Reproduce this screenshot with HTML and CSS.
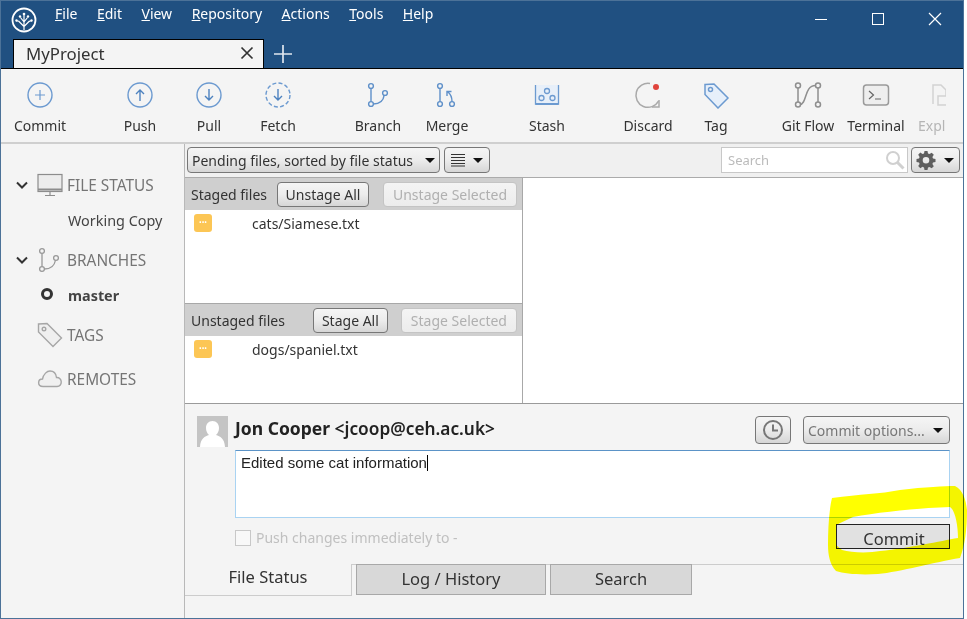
FILE: index.html
```html
<!DOCTYPE html>
<html lang="en">
<head>
    <meta charset="UTF-8">
    <title>MyProject - Sourcetree</title>
    <link rel="stylesheet" href="styles.css">
</head>
<body>
<div class="window">
    <header class="titlebar">
        <div class="title-row">
            <svg class="logo" width="26" height="26" viewBox="0 0 26 26" fill="none" stroke="#fff">
                <circle cx="13" cy="13" r="11.5" stroke-width="1.8"/>
                <path d="M13 23V8M13 19.500L7.500 14M13 19.500l5.500-5.500M13 15L9.500 10.500M13 15l3.500-4.500M7.500 14H5.500M18.500 14h2" stroke-width="1.200"/>
                <g fill="#fff" stroke="none"><circle cx="13" cy="7" r="1.300"/><circle cx="9" cy="9.500" r="1.200"/><circle cx="17" cy="9.500" r="1.200"/><circle cx="5.500" cy="13.500" r="1.200"/><circle cx="20.500" cy="13.500" r="1.200"/></g>
            </svg>
            <nav class="menu">
                <span><u>F</u>ile</span>
                <span><u>E</u>dit</span>
                <span><u>V</u>iew</span>
                <span><u>R</u>epository</span>
                <span><u>A</u>ctions</span>
                <span><u>T</u>ools</span>
                <span><u>H</u>elp</span>
            </nav>
            <div class="win-controls">
                <svg width="14" height="14" viewBox="0 0 14 14" stroke="#fff" fill="none"><path d="M1 7.500h12"/></svg>
                <svg width="14" height="14" viewBox="0 0 14 14" stroke="#fff" fill="none"><rect x="1.500" y="1.500" width="11" height="11"/></svg>
                <svg width="14" height="14" viewBox="0 0 14 14" stroke="#fff" fill="none" stroke-width="1.200"><path d="M1 1l12 12M13 1L1 13"/></svg>
            </div>
        </div>
        <div class="tab-row">
            <div class="project-tab">
                <span>MyProject</span>
                <svg width="14" height="14" viewBox="0 0 14 14" stroke="#333" fill="none" stroke-width="1.700"><path d="M1.500 1.500l11 11M12.500 1.500l-11 11"/></svg>
            </div>
            <svg class="new-tab" width="20" height="20" viewBox="0 0 20 20" stroke="#dfe6ee" stroke-width="1.700"><path d="M10 1v18M1 10h18"/></svg>
        </div>
    </header>

    <div class="toolbar">
        <div class="tool tool-first">
            <svg width="28" height="28" viewBox="0 0 28 28" fill="none" stroke="#6c9ad0" stroke-width="1.400"><circle cx="14" cy="14" r="12"/><path d="M14 9v10M9 14h10" stroke-width="1.200"/></svg>
            <span>Commit</span>
        </div>
        <div class="tool tool-group">
            <svg width="28" height="28" viewBox="0 0 28 28" fill="none" stroke="#6c9ad0" stroke-width="1.400"><circle cx="14" cy="14" r="12"/><path d="M14 20V9M10 13l4-4 4 4" stroke="#4d82bf"/></svg>
            <span>Push</span>
        </div>
        <div class="tool tool-near">
            <svg width="28" height="28" viewBox="0 0 28 28" fill="none" stroke="#6c9ad0" stroke-width="1.400"><circle cx="14" cy="14" r="12"/><path d="M14 8v11M10 15l4 4 4-4" stroke="#4d82bf"/></svg>
            <span>Pull</span>
        </div>
        <div class="tool tool-near">
            <svg width="28" height="28" viewBox="0 0 28 28" fill="none" stroke="#6c9ad0" stroke-width="1.400"><circle cx="14" cy="14" r="12" stroke-dasharray="4 2.300"/><path d="M14 8v11M10 15l4 4 4-4" stroke="#4d82bf"/></svg>
            <span>Fetch</span>
        </div>
        <div class="tool tool-group">
            <svg width="28" height="28" viewBox="0 0 28 28" fill="none" stroke="#5f90c9" stroke-width="1.400"><circle cx="7" cy="5" r="2.400"/><circle cx="7" cy="23" r="2.400"/><circle cx="21" cy="12" r="2.400"/><path d="M7 7.500v13M9.400 23c7 0 10-3 10.800-8.800"/></svg>
            <span>Branch</span>
        </div>
        <div class="tool tool-near">
            <svg width="28" height="28" viewBox="0 0 28 28" fill="none" stroke="#5f90c9" stroke-width="1.400"><circle cx="7" cy="5" r="2.400"/><circle cx="7" cy="23" r="2.400"/><circle cx="19" cy="23" r="2.400"/><path d="M7 7.500v13M19 20.500c0-4-1-7-4-9.500M14 15v-4.500h4.500"/></svg>
            <span>Merge</span>
        </div>
        <div class="tool tool-group">
            <svg width="28" height="28" viewBox="0 0 28 28" fill="none" stroke="#6c9ad0" stroke-width="1.300"><path d="M2.500 4v19h23V4" fill="#e7eff9"/><path d="M2.500 23h23" stroke-width="2"/><circle cx="14" cy="10" r="2.500"/><circle cx="8.500" cy="17" r="2.500"/><circle cx="19.500" cy="17" r="2.500"/></svg>
            <span>Stash</span>
        </div>
        <div class="tool tool-wide">
            <svg width="28" height="28" viewBox="0 0 28 28" fill="none" stroke="#a9a9a9" stroke-width="1.500"><path d="M16 2.500A12 12 0 1 0 24.500 20"/><path d="M25 19v7h-7"/><circle cx="22" cy="6" r="3" fill="#e0443c" stroke="none"/></svg>
            <span>Discard</span>
        </div>
        <div class="tool">
            <svg width="28" height="28" viewBox="0 0 28 28" fill="#e6effa" stroke="#6c9ad0" stroke-width="1.500"><path d="M3 3.500l9-.5 14 14-10 10L3 13.500z"/><circle cx="8.500" cy="8.500" r="2" fill="#f4f4f4"/></svg>
            <span>Tag</span>
        </div>
        <div class="tool tool-flow">
            <svg width="28" height="28" viewBox="0 0 28 28" fill="none" stroke="#8f8f8f" stroke-width="1.500"><circle cx="4" cy="4.500" r="2.500"/><circle cx="4" cy="23.500" r="2.500"/><circle cx="24" cy="4.500" r="2.500"/><circle cx="24" cy="23.500" r="2.500"/><path d="M4 7v14M24 7v14M6 23.500c7 0 4-19 15.500-19"/></svg>
            <span>Git Flow</span>
        </div>
        <div class="tool">
            <svg width="28" height="28" viewBox="0 0 28 28" fill="#eee" stroke="#9a9a9a" stroke-width="1.500"><rect x="1.500" y="4" width="25" height="20" rx="3"/><path d="M7 10l4.500 4L7 18M13 18h6" fill="none" stroke="#666" stroke-width="1.200"/></svg>
            <span>Terminal</span>
        </div>
        <div class="tool tool-last">
            <svg width="28" height="28" viewBox="0 0 28 28" fill="none" stroke="#d2d2d2" stroke-width="1.500"><path d="M3 23V4h8l5 5v6"/><rect x="8" y="15" width="12" height="9"/></svg>
            <span>Expl</span>
        </div>
    </div>

    <div class="workspace">
        <aside class="sidebar">
            <div class="side-row side-first">
                <svg class="chev" width="12" height="8" viewBox="0 0 12 8" fill="none" stroke="#333" stroke-width="2"><path d="M1 1.500l5 5 5-5"/></svg>
                <svg class="side-icon" width="26" height="24" viewBox="0 0 26 24" fill="#ececec" stroke="#8c8c8c" stroke-width="1.200"><rect x="1" y="1.500" width="24" height="17"/><path d="M1 16.500h24" stroke-width="2"/><path d="M13 19v3M8 22.500h10" fill="none"/></svg>
                <span>FILE STATUS</span>
            </div>
            <div class="side-sub">Working Copy</div>
            <div class="side-row side-gap">
                <svg class="chev" width="12" height="8" viewBox="0 0 12 8" fill="none" stroke="#333" stroke-width="2"><path d="M1 1.500l5 5 5-5"/></svg>
                <svg class="side-icon" width="26" height="26" viewBox="0 0 26 26" fill="none" stroke="#999" stroke-width="1.300"><circle cx="5" cy="4" r="2.400"/><circle cx="5" cy="22" r="2.400"/><circle cx="19" cy="11" r="2.400"/><path d="M5 6.500v13M7.400 22c7 0 10-3 11-8.500"/></svg>
                <span>BRANCHES</span>
            </div>
            <div class="side-sub side-branch">
                <i class="head-dot"></i>
                <b>master</b>
            </div>
            <div class="side-row side-plain side-gap">
                <svg class="side-icon" width="26" height="26" viewBox="0 0 26 26" fill="#efefef" stroke="#a6a6a6" stroke-width="1.400"><path d="M1.500 2l8.500-.5 14.500 14.500-8.500 8.500L1.500 10z"/><circle cx="7" cy="7" r="1.800" fill="#f4f4f4"/></svg>
                <span>TAGS</span>
            </div>
            <div class="side-row side-plain side-gap-lg">
                <svg class="side-icon" width="26" height="20" viewBox="0 0 26 20" fill="#f0f0f0" stroke="#a6a6a6" stroke-width="1.400"><path d="M6 17.500c-6 0-5.500-7.500-.5-7.500C6.500 5 10 2 13 2c3.500 0 6 2.500 6.500 6.500 6-.5 6.500 9 .5 9z"/></svg>
                <span>REMOTES</span>
            </div>
        </aside>

        <main class="main">
            <div class="filter-bar">
                <div class="btn select-files">
                    <span>Pending files, sorted by file status</span>
                    <i class="caret"></i>
                </div>
                <div class="btn select-view">
                    <svg width="16" height="14" viewBox="0 0 16 14" stroke="#333" stroke-width="1.200"><path d="M1 1.500h14M1 4.500h14M1 7.500h14M1 10.500h14M1 13h14"/></svg>
                    <i class="caret"></i>
                </div>
                <div class="search-box">
                    <span>Search</span>
                    <svg width="20" height="20" viewBox="0 0 20 20" fill="none" stroke="#d0d0d0" stroke-width="2"><circle cx="8" cy="8" r="6"/><path d="M12.500 12.500l6 6" stroke-width="3"/></svg>
                </div>
                <div class="btn settings">
                    <svg width="20" height="20" viewBox="0 0 20 20" fill="#5f5f5f"><path fill-rule="evenodd" d="M8.500 1h3l.5 2.500 1.500.6L15.700 2.700l2.100 2.100-1.400 2.200.6 1.500 2.500.5v3l-2.500.5-.6 1.500 1.400 2.200-2.100 2.100-2.200-1.400-1.500.6-.5 2.500h-3L8 17.400l-1.500-.6-2.200 1.400-2.100-2.100 1.400-2.200-.6-1.500L.5 11.900v-3L3 8.400l.6-1.500-1.400-2.200 2.100-2.100 2.200 1.400L8 3.500zM10 7a3.300 3.300 0 1 0 0 6.600A3.300 3.300 0 0 0 10 7z"/></svg>
                    <i class="caret"></i>
                </div>
            </div>

            <div class="split">
                <div class="file-lists">
                    <section class="file-pane pane-staged">
                        <div class="pane-head">
                            <span class="pane-title">Staged files</span>
                            <div class="btn btn-small btn-unstage">Unstage All</div>
                            <div class="btn btn-small btn-off btn-unstage-sel">Unstage Selected</div>
                        </div>
                        <div class="file-row">
                            <i class="status-badge">•••</i>
                            <span>cats/Siamese.txt</span>
                        </div>
                    </section>
                    <section class="file-pane pane-unstaged">
                        <div class="pane-head">
                            <span class="pane-title">Unstaged files</span>
                            <div class="btn btn-small btn-stage">Stage All</div>
                            <div class="btn btn-small btn-off btn-stage-sel">Stage Selected</div>
                        </div>
                        <div class="file-row">
                            <i class="status-badge">•••</i>
                            <span>dogs/spaniel.txt</span>
                        </div>
                    </section>
                </div>
                <div class="diff-pane"></div>
            </div>

            <div class="commit-area">
                <div class="author-row">
                    <svg class="avatar" width="31" height="31" viewBox="0 0 31 31"><rect width="31" height="31" fill="#c4c4c4"/><path d="M15.500 5c4 0 6.500 3 6.500 7 0 3-1.300 5.500-3 7 4 1.500 8.500 3 9 12H3c.5-9 5-10.500 9-12-1.700-1.500-3-4-3-7 0-4 2.500-7 6.500-7z" fill="#fff"/></svg>
                    <span class="author"><b>Jon Cooper</b> <span class="email">&lt;jcoop@ceh.ac.uk&gt;</span></span>
                    <div class="btn btn-clock">
                        <svg width="22" height="22" viewBox="0 0 22 22" fill="none" stroke="#777" stroke-width="2"><circle cx="11" cy="11" r="9"/><path d="M11 5.500V11.500H16"/></svg>
                    </div>
                    <div class="btn btn-options">
                        <span>Commit options...</span>
                        <i class="caret"></i>
                    </div>
                </div>
                <div class="message">Edited some cat information<i class="cursor"></i></div>
                <div class="push-row">
                    <i class="checkbox"></i>
                    <span class="push-label">Push changes immediately to -</span>
                    <div class="commit-btn">Commit</div>
                </div>
                <div class="tabs">
                    <div class="tab tab-active">File Status</div>
                    <div class="tab tab-log">Log / History</div>
                    <div class="tab tab-search">Search</div>
                </div>
            </div>
        </main>
    </div>

    <!-- marker scribble drawn over the screenshot -->
    <svg class="scribble" width="967" height="619" viewBox="0 0 967 619">
        <path fill="#ffff00" fill-rule="evenodd" d="M832 498C860 494 880 494 900 490C925 487 945 486 955 486C963 490 966 500 967 510C967 530 965 545 960 558C935 562 900 572 878 574C860 575 845 574 836 571C830 565 828 555 828 545C828 530 829 510 832 498ZM853 517C880 512 920 508 950 507C955 510 958 525 958 538C940 541 910 548 880 551C870 553 852 553 842 550L836 545V525Z"/>
    </svg>
</div>
</body>
</html>
```

FILE: styles.css
```css
* {
    box-sizing: border-box;
}
body {
    margin: 0;
    background-color: #fff;
    font-family: "Noto Sans", sans-serif;
    font-size: 14px;
    color: #333;
}
i {
    font-style: normal;
}
.window {
    position: relative;
    width: 964px;
    height: 619px;
    background-color: #f4f4f4;
    border-left: 1px solid #4c7298;
    border-right: 1px solid #4c7298;
    border-bottom: 1px solid #4c7298;
    display: flex;
    flex-direction: column;
}
.scribble {
    position: absolute;
    left: -1px;
    top: 0;
    mix-blend-mode: multiply;
    pointer-events: none;
}

/* title bar */
.titlebar {
    height: 69px;
    flex: none;
    background-color: #205081;
    border-top: 1px solid #4c7298;
    border-bottom: 1px solid #000;
    color: #fff;
}
.title-row {
    height: 38px;
    display: flex;
}
.logo {
    margin: 6px 0 0 10px;
}
.menu {
    display: flex;
    gap: 19.500px;
    margin: 3px 0 0 18px;
    height: 20px;
    line-height: 20px;
}
.win-controls {
    display: flex;
    gap: 43px;
    margin: 11px 0 0 auto;
    padding-right: 21px;
}
.tab-row {
    height: 29px;
    display: flex;
    align-items: center;
    padding-left: 12px;
}
.project-tab {
    width: 251px;
    height: 29px;
    background-color: #f4f4f4;
    border: 1px solid #000;
    border-bottom: none;
    color: #333;
    font-size: 16.800px;
    padding: 0 9px 2px 12px;
    display: flex;
    align-items: center;
    justify-content: space-between;
}
.new-tab {
    margin-left: 9px;
}

/* toolbar */
.toolbar {
    height: 75px;
    flex: none;
    display: flex;
    border-bottom: 2px solid #cfcfcf;
}
.tool {
    width: 68px;
    flex: none;
    display: flex;
    flex-direction: column;
    align-items: center;
    padding-top: 12px;
    white-space: nowrap;
}
.tool span {
    margin-top: 7px;
}
.tool-first {
    margin-left: 5px;
}
.tool-group {
    margin-left: 32px;
}
.tool-near {
    margin-left: 1px;
}
.tool-wide {
    margin-left: 33px;
}
.tool-flow {
    margin-left: 24px;
}
.tool-last {
    width: 28px;
    margin-left: 8px;
    align-items: flex-start;
    color: #b5b5b5;
    overflow: hidden;
}
.tool-last svg {
    margin-left: 12px;
}

/* sidebar */
.workspace {
    flex: 1;
    display: flex;
    min-height: 0;
}
.sidebar {
    width: 183px;
    flex: none;
    padding-top: 26px;
}
.side-row {
    height: 30px;
    display: flex;
    align-items: center;
    color: #757575;
    font-size: 15.400px;
    padding-left: 15px;
}
.side-plain {
    padding-left: 36px;
}
.chev {
    margin-right: 9px;
}
.side-icon {
    margin-right: 4px;
}
.side-sub {
    height: 30px;
    line-height: 30px;
    padding-left: 67px;
    margin-top: 6px;
    color: #444;
    font-size: 14.400px;
}
.side-branch {
    margin-top: 6px;
    display: flex;
    align-items: center;
    padding-left: 40px;
}
.side-branch b {
    margin-left: 15px;
}
.head-dot {
    width: 12px;
    height: 12px;
    border: 3.500px solid #333;
    border-radius: 50%;
    margin-top: -4px;
}
.side-gap {
    margin-top: 9px;
}
.side-gap-lg {
    margin-top: 14px;
}

/* main panel */
.main {
    flex: 1;
    min-width: 0;
    border-left: 1px solid #b8b8b8;
    display: flex;
    flex-direction: column;
}
.btn {
    display: flex;
    align-items: center;
    height: 26px;
    border: 1px solid #777;
    border-radius: 4px;
    background: linear-gradient(#f5f5f5 0%, #ececec 50%, #d6d6d6 100%);
    white-space: nowrap;
}
.caret {
    width: 0;
    height: 0;
    border-left: 5px solid transparent;
    border-right: 5px solid transparent;
    border-top: 5px solid #111;
}
.filter-bar {
    height: 34px;
    flex: none;
    background-color: #f0f0f0;
    border-bottom: 1px solid #ababab;
    display: flex;
    align-items: center;
    padding: 0 3px 1px 2px;
}
.select-files {
    width: 253px;
    padding: 0 4px 0 4px;
    justify-content: space-between;
}
.select-view {
    width: 46px;
    margin-left: 4px;
    padding: 0 6px 0 5px;
    justify-content: space-between;
}
.search-box {
    width: 187px;
    height: 26px;
    margin-left: auto;
    background-color: #fff;
    border: 1px solid #c8c8c8;
    color: #bbb;
    font-size: 13px;
    padding: 0 2px 0 6px;
    display: flex;
    align-items: center;
    justify-content: space-between;
}
.settings {
    width: 49px;
    margin-left: 3px;
    padding: 0 5px 0 4px;
    justify-content: space-between;
}
.split {
    height: 226px;
    flex: none;
    display: flex;
    border-bottom: 1px solid #9a9a9a;
}
.file-lists {
    width: 338px;
    flex: none;
    display: flex;
    flex-direction: column;
    border-right: 1px solid #a8a8a8;
}
.diff-pane {
    flex: 1;
    background-color: #fff;
}
.file-pane {
    background-color: #fff;
}
.pane-staged {
    height: 126px;
    border-bottom: 1px solid #a8a8a8;
}
.pane-unstaged {
    flex: 1;
}
.pane-head {
    height: 32px;
    background-color: #cfcfcf;
    display: flex;
    align-items: center;
    padding-left: 6px;
}
.pane-title {
    flex: none;
}
.btn-small {
    height: 25px;
    justify-content: center;
}
.btn-off {
    border-color: #c4c4c4;
    background: linear-gradient(#f4f4f4, #ececec);
    color: #b0b0b0;
}
.btn-unstage {
    width: 92px;
    margin-left: 10px;
}
.btn-unstage-sel {
    width: 134px;
    margin-left: 14px;
}
.btn-stage {
    width: 75px;
    margin-left: 28px;
}
.btn-stage-sel {
    width: 116px;
    margin-left: 13px;
}
.file-row {
    height: 26px;
    display: flex;
    align-items: center;
    padding-left: 9px;
}
.status-badge {
    width: 18px;
    height: 18px;
    border-radius: 3px;
    background-color: #fcc655;
    color: #fff;
    font-size: 7px;
    line-height: 18px;
    text-align: center;
}
.file-row span {
    margin-left: 40px;
}

/* commit area */
.commit-area {
    flex: 1;
    min-height: 0;
    display: flex;
    flex-direction: column;
    padding-top: 12px;
}
.author-row {
    height: 32px;
    display: flex;
    align-items: flex-start;
    padding: 0 13px 0 12px;
}
.author {
    font-size: 17.300px;
    font-weight: 600;
    color: #222;
    margin-left: 7px;
    line-height: 24px;
    white-space: nowrap;
}
.author b {
    font-weight: 700;
    font-size: 17.500px;
}
.btn-clock {
    width: 36px;
    height: 28px;
    margin-left: auto;
    justify-content: center;
}
.btn-options {
    width: 147px;
    height: 28px;
    margin-left: 12px;
    padding: 0 6px 0 4px;
    justify-content: space-between;
    color: #777;
}
.message {
    height: 68px;
    margin: 2px 13px 0 50px;
    background-color: #fff;
    border: 1px solid #a9d3f2;
    border-top-color: #5b93c7;
    font-family: "Liberation Sans", sans-serif;
    font-size: 15px;
    color: #222;
    padding: 3px 5px;
    line-height: 18px;
}
.cursor {
    display: inline-block;
    width: 1px;
    height: 16px;
    background-color: #000;
    vertical-align: -3px;
}
.push-row {
    height: 46px;
    display: flex;
    align-items: flex-start;
    padding: 6px 13px 0 50px;
}
.checkbox {
    width: 16px;
    height: 16px;
    margin-top: 6px;
    background-color: #f8f8f8;
    border: 1px solid #c8c8c8;
}
.push-label {
    margin: 4px 0 0 5px;
    color: #c0c0c0;
}
.commit-btn {
    width: 114px;
    height: 25px;
    margin-left: auto;
    background-color: #e1e1e1;
    border: 1px solid #222;
    font-size: 16.500px;
    line-height: 27px;
    text-align: center;
    padding-left: 2px;
}
.tabs {
    height: 32px;
    flex: none;
    display: flex;
    align-items: flex-start;
    border-top: 1px solid #ccc;
    font-size: 16.500px;
}
.tab {
    height: 31px;
    margin-top: -1px;
    line-height: 28px;
    text-align: center;
}
.tab-active {
    width: 167px;
    margin-top: -1px;
    height: 32px;
    background-color: #f4f4f4;
    border-right: 1px solid #ccc;
    border-bottom: 1px solid #ccc;
    line-height: 26px;
}
.tab-log,
.tab-search {
    background-color: #d8d8d8;
    border: 1px solid #a8a8a8;
    line-height: 28px;
}
.tab-log {
    width: 190px;
    margin-left: 4px;
}
.tab-search {
    width: 142px;
    margin-left: 4px;
}
```
